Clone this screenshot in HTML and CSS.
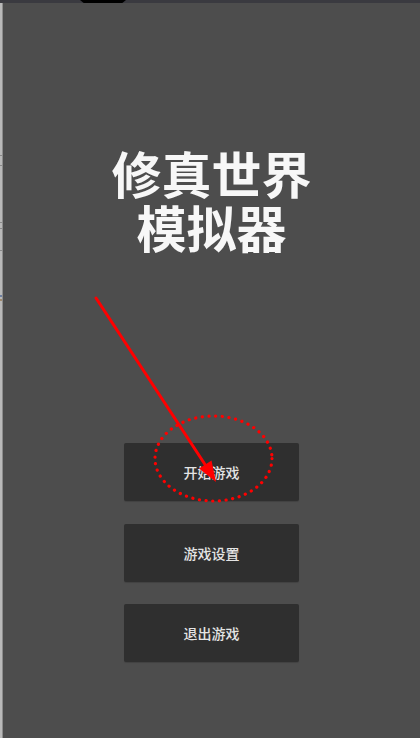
FILE: index.html
```html
<!DOCTYPE html>
<html lang="zh">
<head>
<meta charset="utf-8">
<title>修真世界模拟器</title>
<link rel="stylesheet" href="styles.css">
</head>
<body>
<div class="screen">
  <div class="topbar"><div class="notch"></div></div>
  <div class="body">
    <div class="edge">
      <div class="mark m1"></div>
      <div class="mark m2"></div>
      <div class="mark m3"></div>
      <div class="mark m4"></div>
      <div class="mark m5"></div>
      <div class="mark color m6"></div>
      <div class="mark color2 m7"></div>
    </div>
    <main class="main">
      <h1 class="title">
        <span class="title-line">修真世界</span>
        <span class="title-line">模拟器</span>
      </h1>
      <nav class="menu">
        <button class="btn">开始游戏</button>
        <button class="btn">游戏设置</button>
        <button class="btn">退出游戏</button>
      </nav>
    </main>
  </div>
  <svg class="annot" width="420" height="738" viewBox="0 0 420 738" aria-hidden="true">
    <line x1="96" y1="298" x2="206" y2="466" stroke="#ff0000" stroke-width="3" stroke-linecap="round"/>
    <polygon points="216,482 199,468.5 211.5,460.5" fill="#ff0000"/>
    <ellipse cx="213.5" cy="458.5" rx="58.5" ry="42.5" fill="none" stroke="#ff0000" stroke-width="3.2" stroke-linecap="round" stroke-dasharray="0.1 6.6"/>
  </svg>
</div>
</body>
</html>
```
FILE: styles.css
```css
html, body {
  margin: 0;
  padding: 0;
  background: #4d4d4d;
}
.screen {
  position: relative;
  width: 420px;
  height: 738px;
  display: flex;
  flex-direction: column;
  overflow: hidden;
  font-family: "Noto Sans CJK SC", "Noto Sans", sans-serif;
}
.topbar {
  height: 3px;
  flex: none;
  background: #3a3a40;
  display: flex;
}
.notch {
  margin-left: 80px;
  width: 46px;
  height: 3px;
  background: #000;
  clip-path: polygon(0 0, 100% 0, 92% 100%, 8% 100%);
}
.body {
  flex: 1;
  display: flex;
}
.edge {
  width: 2px;
  flex: none;
  background: #b9b9b9;
  border-right: 1px solid #8c8c8c;
  display: flex;
  flex-direction: column;
}
.mark {
  height: 1px;
  background: #8a8a8a;
}
.m1 { margin-top: 152px; }
.m2 { margin-top: 9px; }
.m3 { margin-top: 56px; }
.m4 { margin-top: 5px; }
.m5 { margin-top: 21px; }
.mark.color { height: 2px; background: #6e7fa0; margin-top: 44px; }
.mark.color2 { height: 2px; background: #a08a6e; margin-top: 2px; }
.main {
  flex: 1;
  display: flex;
  flex-direction: column;
  align-items: center;
}
.title {
  margin: 142px 0 0;
  display: flex;
  flex-direction: column;
  align-items: center;
  font-size: 50px;
  font-weight: 700;
  color: #f7f7f7;
  text-align: center;
}
.title-line {
  display: block;
  height: 54px;
  line-height: 54px;
}
.menu {
  margin-top: 190px;
  display: flex;
  flex-direction: column;
  gap: 22.5px;
}
.btn {
  width: 175px;
  height: 58px;
  border: none;
  border-radius: 2px;
  background: #2f2f2f;
  color: #e4e4e4;
  font-family: "Noto Sans CJK SC", "Noto Sans", sans-serif;
  font-size: 14px;
  font-weight: 500;
  padding: 0;
  box-shadow: 0 1px 1px rgba(0,0,0,0.15);
}
.annot {
  position: absolute;
  left: 0;
  top: 0;
  pointer-events: none;
}
```
